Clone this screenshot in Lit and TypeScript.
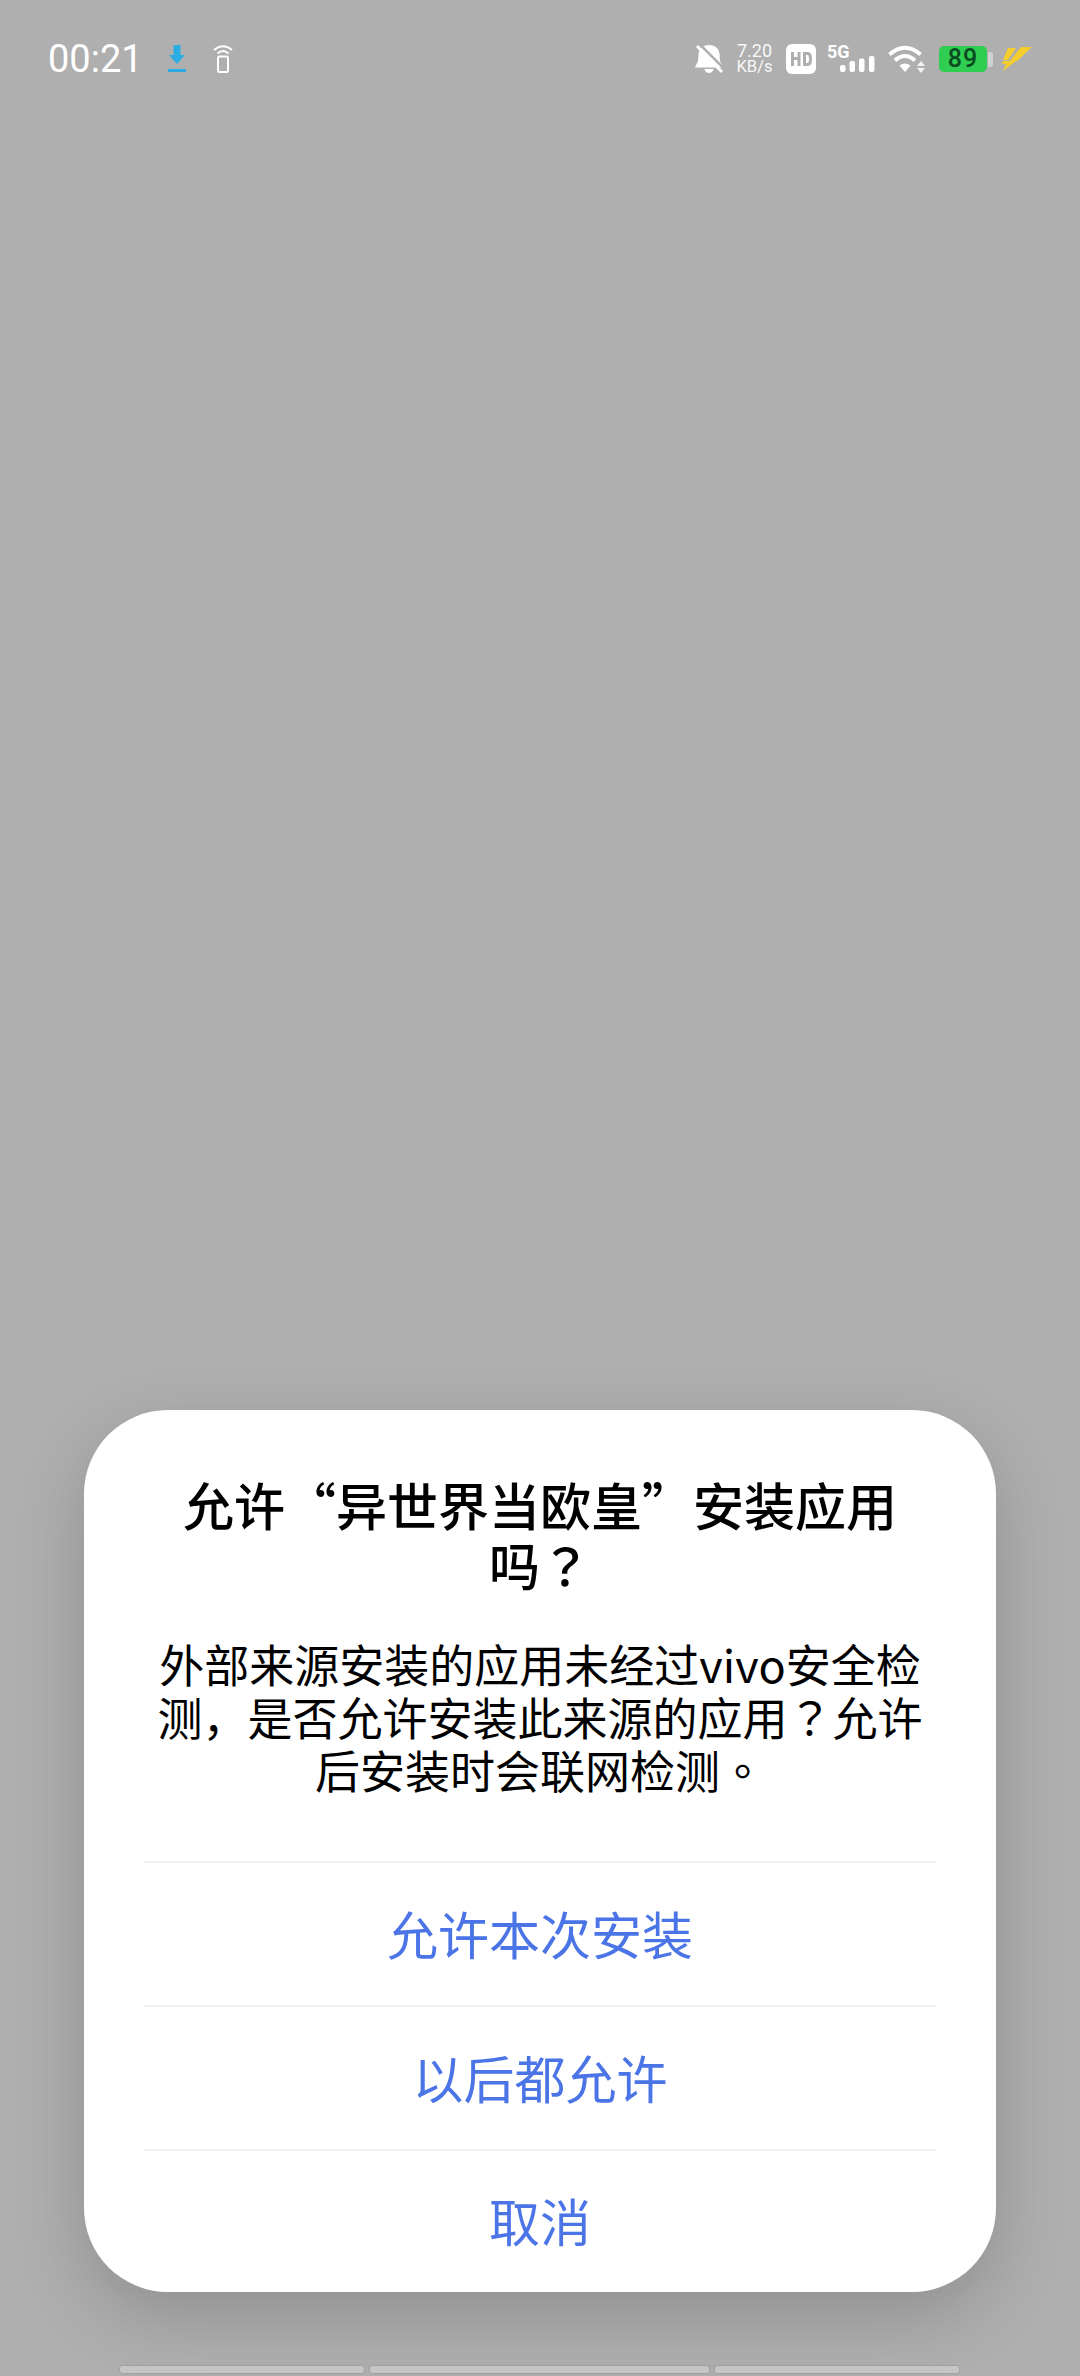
import { LitElement, css, html, svg } from "lit";
import { customElement } from "lit/decorators.js";

const downloadIcon = svg`<svg class="icon" width="18" height="28" viewBox="0 0 18 28" fill="#2bace2">
  <path d="M5.500 0h7v10H17L9 19 1 10h4.500z"/>
  <rect x="0" y="24" width="18" height="3"/>
</svg>`;

const remoteIcon = svg`<svg class="icon" width="20" height="28" viewBox="0 0 20 28" fill="none" stroke="#fff" stroke-width="2">
  <path d="M1 5Q10 -2.500 19 5"/>
  <path d="M4.500 8.500Q10 3.500 15.500 8.500"/>
  <rect x="5" y="11.500" width="10" height="15.500" rx="1.500"/>
</svg>`;

const bellIcon = svg`<svg class="icon" width="28" height="30" viewBox="0 0 28 30">
  <path d="M14 1c6.500 0 10 4 10.500 9l.5 7 3 6.500H0l3-6.500.5-7C4 5 7.500 1 14 1z" fill="#fff"/>
  <path d="M9.500 25h9c-.5 2.500-2.200 4-4.500 4s-4-1.500-4.500-4z" fill="#fff"/>
  <path d="M4.500 0l27 27" stroke="#afafaf" stroke-width="2.500"/>
  <path d="M2 2l25 26" stroke="#fff" stroke-width="3"/>
</svg>`;

const hdIcon = svg`<svg class="icon" width="30" height="30" viewBox="0 0 30 30">
  <rect width="30" height="30" rx="6" fill="#fff"/>
  <path d="M5 8h3v5h3.500v-5h3v14h-3v-6h-3.500v6H5z" fill="#afafaf"/>
  <path fill-rule="evenodd" d="M17 8h4.500c3 0 4.500 2 4.500 7s-1.500 7-4.500 7H17zM20 11v8h1.200c1.200 0 1.800-1 1.800-4s-.6-4-1.800-4z" fill="#afafaf"/>
</svg>`;

const signalIcon = svg`<svg class="icon" width="35" height="16" viewBox="0 0 35 16" fill="#fff">
  <rect x="0" y="9" width="5.500" height="7" rx="2"/>
  <rect x="9.500" y="5" width="5.500" height="11" rx="2"/>
  <rect x="19" y="2.500" width="5.500" height="13.500" rx="2"/>
  <rect x="29" y="0" width="5.500" height="16" rx="2"/>
</svg>`;

const wifiIcon = svg`<svg class="icon" width="37" height="28" viewBox="0 0 37 28" fill="none">
  <path d="M1.500 9.500Q17 -4 32.500 9.500" stroke="#fff" stroke-width="4"/>
  <path d="M7 15.500Q17 6.500 27 15.500" stroke="#fff" stroke-width="4"/>
  <path d="M11.500 20.500Q17 16.500 22.500 20.500L17 27z" fill="#fff"/>
  <path d="M33 16l4 5h-8zM33 28l-4-5h8z" fill="#fff" opacity=".85"/>
</svg>`;

const boltIcon = svg`<svg class="icon" width="30" height="26" viewBox="0 0 30 26" fill="#f5cd2c">
  <path d="M6 2h8L6 14H1z"/>
  <path d="M19 1h11L15 15H8z"/>
  <path d="M1 15h13L1 25l3-7H0z"/>
</svg>`;

@customElement("app-root")
export class AppRoot extends LitElement {
  static styles = css`
    :host {
      display: block;
    }

    .page {
      height: 2376px;
      background: #afafaf;
      display: flex;
      flex-direction: column;
      overflow: hidden;
      font-family: "Noto Sans CJK SC", sans-serif;
    }

    .status {
      height: 30px;
      margin-top: 44px;
      padding: 0 48px;
      display: flex;
      align-items: center;
      color: #fff;
      font-family: Roboto, sans-serif;
    }

    .icon {
      display: block;
      flex: none;
    }

    .time {
      font-size: 38px;
      line-height: 30px;
      width: 120px;
    }

    .remote {
      margin-left: 27px;
    }

    .right {
      margin-left: auto;
      display: flex;
      align-items: center;
    }

    .speed {
      margin-left: 13px;
      width: 37px;
      text-align: center;
      line-height: 16.500px;
      white-space: nowrap;
      opacity: 0.92;
    }

    .rate {
      display: block;
      font-size: 18px;
    }

    .unit {
      display: block;
      font-size: 16.500px;
    }

    .hd {
      margin-left: 13px;
    }

    .net {
      margin-left: 11px;
      width: 48px;
      height: 30px;
      display: flex;
      flex-direction: column;
      font-size: 18px;
      line-height: 15px;
      font-weight: 700;
    }

    .net .icon {
      margin-left: 13px;
      margin-top: -3px;
    }

    .wifi {
      margin-left: 13px;
    }

    .battery {
      margin-left: 14px;
      display: flex;
      align-items: center;
    }

    .level {
      width: 48px;
      height: 26px;
      border-radius: 5px;
      background: #2fce52;
      color: #0a4a1e;
      font-size: 25px;
      line-height: 26px;
      font-weight: 500;
      text-align: center;
      letter-spacing: 1px;
    }

    .cap {
      width: 5px;
      height: 15px;
      border-radius: 0 3px 3px 0;
      background: #d0d0d0;
      margin-left: 1px;
    }

    .bolt {
      margin-left: 9px;
    }

    .card {
      margin: auto 84px 0;
      height: 882px;
      box-sizing: border-box;
      padding: 64px 60px 0;
      background: #fff;
      border-radius: 84px;
      box-shadow: 0 24px 70px rgba(0, 0, 0, 0.18);
      display: flex;
      flex-direction: column;
      text-align: center;
    }

    .title {
      margin: 0;
      font-size: 51px;
      line-height: 60px;
      font-weight: 500;
      color: #000;
    }

    .body {
      margin: 43px 0 0;
      font-size: 45px;
      line-height: 53px;
      font-weight: 400;
      color: #000;
      height: 224px;
    }

    .mark {
      font-family: "Noto Sans CJK TC", sans-serif;
    }

    .actions {
      display: flex;
      flex-direction: column;
    }

    .actions button {
      height: 144px;
      border: 0;
      border-top: 2px solid #f2f2f2;
      background: none;
      padding: 0 0 3px;
      font: inherit;
      font-size: 51px;
      color: #4b74e6;
    }

    .actions button:last-child {
      height: 143px;
    }

    .nav {
      margin: 74px 120px 3px;
      display: flex;
      gap: 6px;
    }

    .nav span {
      height: 7px;
      border-radius: 2px;
      background: #c5c5c5;
      box-shadow: 0 0 2px rgba(0, 0, 0, 0.25);
    }

    .nav .side {
      width: 244px;
    }

    .nav .mid {
      width: 339px;
    }
  `;

  render() {
    return html`
      <div class="page">
        <div class="status">
          <span class="time">00:21</span>
          ${downloadIcon}
          <span class="remote">${remoteIcon}</span>
          <div class="right">
            ${bellIcon}
            <div class="speed">
              <span class="rate">7.20</span>
              <span class="unit">KB/s</span>
            </div>
            <span class="hd">${hdIcon}</span>
            <div class="net">5G${signalIcon}</div>
            <span class="wifi">${wifiIcon}</span>
            <div class="battery">
              <div class="level">89</div>
              <div class="cap"></div>
            </div>
            <span class="bolt">${boltIcon}</span>
          </div>
        </div>
        <div class="card">
          <h1 class="title">允许“异世界当欧皇”安装应用<br />吗<span class="mark">？</span></h1>
          <p class="body">
            外部来源安装的应用未经过vivo安全检<br />测，是否允许安装此来源的应用<span class="mark">？</span>允许<br />后安装时会联网检测<span class="mark">。</span>
          </p>
          <div class="actions">
            <button>允许本次安装</button>
            <button>以后都允许</button>
            <button>取消</button>
          </div>
        </div>
        <div class="nav">
          <span class="side"></span>
          <span class="mid"></span>
          <span class="side"></span>
        </div>
      </div>
    `;
  }
}
